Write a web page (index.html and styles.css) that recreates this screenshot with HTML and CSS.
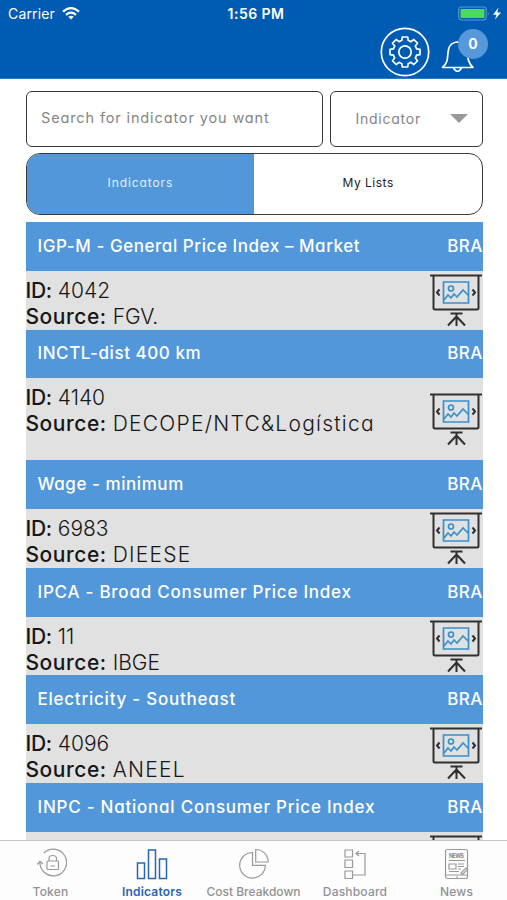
FILE: index.html
```html
<!DOCTYPE html>
<html lang="en">
<head>
<meta charset="utf-8">
<title>Indicators</title>
<link rel="stylesheet" href="styles.css">
</head>
<body>
<svg width="0" height="0" class="defs">
  <symbol id="board" viewBox="0 0 52 54">
    <g fill="none" stroke="#303033" stroke-width="2">
      <path d="M0 2.5H52M3.5 3V35Q3.5 36.5 5 36.5H47Q48.500 36.500 48.500 35V3"/>
      <path d="M20.500 40.500H32.500M26.500 41V53M26 44L18 52.500M27 44L35 52.500M9.500 16.500L7 19.500L9.500 22.500M42.500 16.500L45 19.500L42.500 22.500"/>
    </g>
    <g fill="none" stroke="#3990cb" stroke-width="1.700">
      <path d="M13.500 9H38.500V30H13.500ZM14 27L18 22L21 25L24 21L27 24L33 17L38 22"/>
      <circle cx="21" cy="15.500" r="2.500"/>
    </g>
  </symbol>
</svg>
<div class="app">
  <header class="top">
    <div class="status">
      <div class="carrier"><span>Carrier</span>
        <svg width="18" height="13" viewBox="0 0 18 13" fill="none" stroke="#fff" stroke-width="2.200"><path d="M1 4.700Q9-2.300 17 4.700M4 7.800Q9 3.500 14 7.800"/><path d="M6.300 9.800Q9 7.800 11.700 9.800L9 12.500Z" fill="#fff" stroke="none"/></svg>
      </div>
      <div class="clock">1:56 PM</div>
      <svg class="battery" width="44" height="16" viewBox="0 0 44 16"><rect x=".7" y="1" width="27.500" height="13" rx="3" fill="none" stroke="#5b95d2" stroke-width="1.200"/><rect x="2.500" y="3" width="24" height="9" rx="1" fill="#4cd963"/><path d="M29.800 5.500Q31.500 7.500 29.800 9.500Z" fill="#5b95d2"/><path d="M40.500 1.500L35 8.700H38.500L37 13.500L43 6.500H39.300Z" fill="#fff"/></svg>
    </div>
    <div class="actions">
      <svg width="50" height="50" viewBox="0 0 50 50" fill="none" stroke="#fff" stroke-width="1.700"><circle cx="25" cy="25" r="23.700"/><circle cx="25" cy="25" r="6.200"/><path stroke-linejoin="round" d="M21.800 13.500L22.300 10H27.700L28.200 13.500Q29.700 13.900 31 14.700L33.800 12.500L37.500 16.200L35.300 19Q36.100 20.300 36.500 21.800L40 22.300V27.700L36.500 28.200Q36.100 29.700 35.300 31L37.500 33.800L33.800 37.500L31 35.300Q29.700 36.100 28.200 36.500L27.700 40H22.300L21.800 36.500Q20.300 36.100 19 35.300L16.200 37.500L12.500 33.800L14.700 31Q13.900 29.700 13.500 28.200L10 27.700V22.300L13.500 21.800Q13.900 20.300 14.700 19L12.500 16.200L16.200 12.500L19 14.700Q20.300 13.900 21.800 13.500Z"/></svg>
      <div class="bell">
        <svg width="34" height="34" viewBox="0 0 34 34" fill="none" stroke="#fff" stroke-width="1.700" stroke-linejoin="round"><path d="M1.500 28.500C8 23 6 17 7.500 10.500Q9 3.500 16.500 3Q24.500 3.500 26 11C27 17 26 23 32 28.500Z"/><path d="M12.500 29Q16.500 35.500 20.500 29"/></svg>
        <span class="badge">0</span>
      </div>
    </div>
  </header>
  <main>
    <div class="filters">
      <div class="search"><span>Search for indicator you want</span></div>
      <div class="select"><span>Indicator</span><i class="caret"></i></div>
    </div>
    <div class="segments">
      <div class="segment on"><span>Indicators</span></div>
      <div class="segment"><span>My Lists</span></div>
    </div>
    <section class="list">
      <div class="title"><span>IGP-M - General Price Index – Market</span><b>BRA</b></div>
      <div class="info"><div><p><strong>ID:</strong> 4042</p><p><strong class="source">Source:</strong> FGV.</p></div><svg><use href="#board"/></svg></div>
      <div class="title"><span>INCTL-dist 400 km</span><b>BRA</b></div>
      <div class="info tall"><div><p><strong>ID:</strong> 4140</p><p><strong class="source">Source:</strong> <span class="name">DECOPE/NTC&amp;Logística</span></p></div><svg><use href="#board"/></svg></div>
      <div class="title"><span>Wage - minimum</span><b>BRA</b></div>
      <div class="info"><div><p><strong>ID:</strong> 6983</p><p><strong class="source">Source:</strong> <span class="name">DIEESE</span></p></div><svg><use href="#board"/></svg></div>
      <div class="title"><span class="loose">IPCA - Broad Consumer Price Index</span><b>BRA</b></div>
      <div class="info"><div><p><strong>ID:</strong> 11</p><p><strong class="source">Source:</strong> <span>IBGE</span></p></div><svg><use href="#board"/></svg></div>
      <div class="title"><span class="loose">Electricity - Southeast</span><b>BRA</b></div>
      <div class="info"><div><p><strong>ID:</strong> 4096</p><p><strong class="source">Source:</strong> <span class="name">ANEEL</span></p></div><svg><use href="#board"/></svg></div>
      <div class="title"><span class="loose">INPC - National Consumer Price Index</span><b>BRA</b></div>
      <div class="info"><div></div><svg><use href="#board"/></svg></div>
    </section>
  </main>
  <nav class="tabs">
    <div class="tab"><svg width="32" height="32" viewBox="0 0 32 32"><path d="M9 5A13.300 13.300 0 1 1 5 13.500M2.300 16.500L5 13.300L8 16"/><rect x="12" y="13" width="11.500" height="8.500" rx="1"/><path d="M14 13V10.500Q14 7.500 17.700 7.500T21.500 10.500V13M15.500 18H20"/></svg><span>Token</span></div>
    <div class="tab active"><svg width="32" height="32" viewBox="0 0 32 32"><path d="M1.500 15H8.500V30.500H1.500ZM12.500 2H19.500V30.500H12.500ZM23.500 11H30.500V30.500H23.500Z"/></svg><span>Indicators</span></div>
    <div class="tab wide"><svg width="32" height="32" viewBox="0 0 32 32"><path d="M14.500 4.500A12.800 12.800 0 1 0 27.300 17.300H14.500ZM17.700 1.500A12.500 12.500 0 0 1 30.200 14H17.700Z"/></svg><span>Cost Breakdown</span></div>
    <div class="tab"><svg width="32" height="32" viewBox="0 0 32 32"><path d="M6 2H13.500V9H6ZM6 12H13.500V19.500H6ZM6 23H13.500V30.500H6ZM13.500 27H26V5.500H17M20 3L17 5.500L20 8"/></svg><span>Dashboard</span></div>
    <div class="tab"><svg width="32" height="32" viewBox="0 0 32 32"><rect x="4.500" y="1.500" width="22" height="29" rx="2"/><path d="M8 12.500H24M8 16H15V21H8ZM17 16H23M17 18.500H23M17 21H20M8 23.500H18M5 27H27M15 29H17M20 25L25 20L26.500 21.500L21.500 26.500Z"/><text class="mini" x="8" y="9.500" textLength="15">NEWS</text></svg><span>News</span></div>
  </nav>
</div>
</body>
</html>
```

FILE: styles.css
```css
* { box-sizing: border-box; }
body { margin: 0; background: #fff; font-family: Inter, "Liberation Sans", sans-serif; }
.defs { position: absolute; }
.app { width: 507px; height: 900px; overflow: hidden; display: flex; flex-direction: column; }
.top { height: 79px; flex: none; background: #005cb3; border-bottom: 1px solid #287cc6; color: #fff; }
.status { height: 27px; padding: 0 5px 0 8px; display: grid; grid-template-columns: 1fr auto 1fr; align-items: center; }
.carrier { display: flex; align-items: center; gap: 7px; font-size: 14px; letter-spacing: .15px; }
.clock { font-size: 14px; font-weight: 600; letter-spacing: .45px; margin-left: 2px; }
.battery { justify-self: end; }
.actions { display: flex; justify-content: flex-end; gap: 11px; padding-right: 32px; }
.bell { position: relative; width: 34px; padding-top: 12px; }
.bell svg { display: block; }
.badge { position: absolute; left: 17px; top: 2px; width: 30px; height: 30px; border-radius: 50%; background: #5698da; font-size: 14px; font-weight: 700; line-height: 30px; text-align: center; }
main { flex: 1; min-height: 0; overflow: hidden; padding: 12px 24px 0 25.500px; font-feature-settings: "cv11"; }
.filters { display: flex; gap: 7px; height: 56px; }
.search, .select { border: 1.500px solid #38383c; border-radius: 6px; display: flex; align-items: center; color: #858585; }
.search { width: 297px; padding: 0 0 3px 14.500px; font-size: 14.500px; letter-spacing: .87px; }
.select { width: 153.500px; padding: 0 14px 1px 25px; justify-content: space-between; font-size: 14px; letter-spacing: .75px; }
.caret { border: 9px solid transparent; border-top-color: #999; border-bottom: 0; }
.segments { width: 457.500px; height: 62px; margin: 6px 0 7px; display: flex; border: 1.500px solid #38383c; border-radius: 14px; overflow: hidden; font-size: 12px; letter-spacing: .5px; }
.segment { flex: 1; display: flex; align-items: center; justify-content: center; color: #222; padding-bottom: 4px; }
.on { background: #5297da; color: #e1efff; letter-spacing: .9px; }
.list { width: 457px; }
.title { height: 48.750px; padding: 0 0 1px 12px; background: #5297da; color: #fff; display: flex; align-items: center; justify-content: space-between; font-size: 17px; font-weight: 500; letter-spacing: .56px; white-space: nowrap; }
.title .loose { letter-spacing: .76px; }
.title b { font-weight: 500; letter-spacing: .3px; }
.info { height: 58.750px; background: #e1e1e1; color: #161616; padding-top: 7px; display: flex; justify-content: space-between; font-size: 21px; font-weight: 300; }
.info p { margin: 0; line-height: 26px; white-space: nowrap; }
.info strong { font-weight: 500; letter-spacing: -.3px; }
.info .source { letter-spacing: .55px; }
.info .name { letter-spacing: 1.250px; }
.info svg { width: 52px; height: 54px; margin: -5px 1px 0 0; flex: none; }
.info.tall { height: 82px; }
.tall svg { margin-top: 7px; }
.tabs { height: 60px; flex: none; display: flex; justify-content: space-between; background: #fdfdfd; border-top: 1px solid #c8c8c8; }
.tab { width: 101px; padding-top: 7px; display: flex; flex-direction: column; align-items: center; gap: 5px; color: #929292; font-size: 12px; font-weight: 500; line-height: 14px; letter-spacing: .2px; white-space: nowrap; }
.tab svg { fill: none; stroke: #999; stroke-width: 1.200; }
.tab.wide { letter-spacing: 0; }
.tab.active { color: #2865b6; font-weight: 600; }
.tab.active svg { stroke: #2865b6; stroke-width: 1.500; }
.tab .mini { font-size: 5.500px; font-weight: 700; fill: #888; stroke: none; }
```
